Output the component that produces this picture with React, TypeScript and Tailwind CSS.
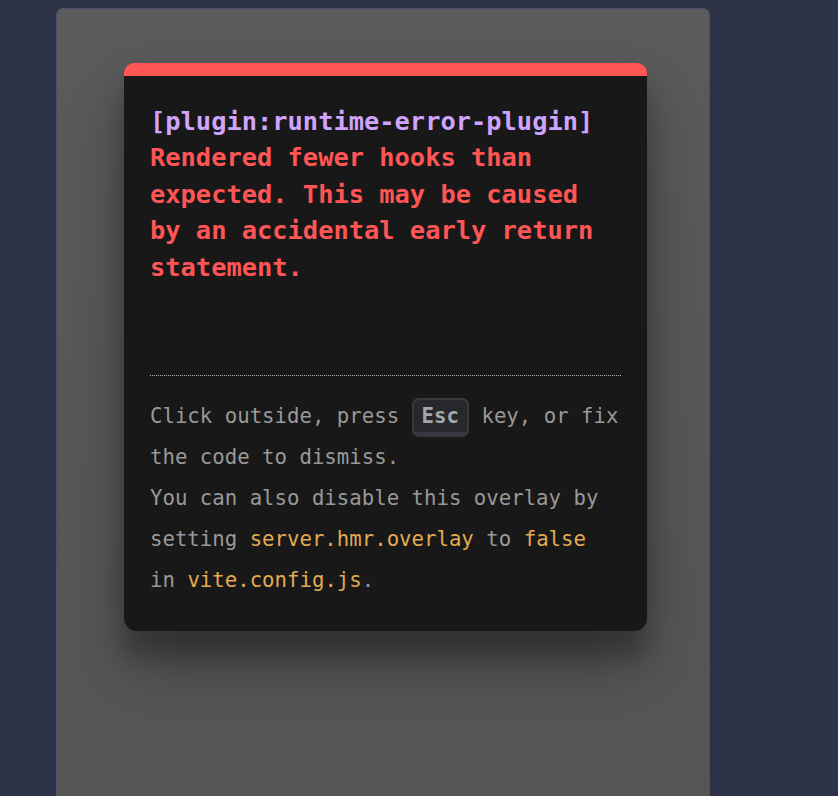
import React from 'react';

const title = ['Rendered fewer hooks than', 'expected. This may be caused', 'by an accidental early return', 'statement.'];

const Code: React.FC<{ children: React.ReactNode }> = ({ children }) => (
  <code className="font-['DejaVu_Sans_Mono',monospace] text-[#e2aa53]">{children}</code>
);

export default function App() {
  return (
    <div className="h-[796px] w-full overflow-hidden bg-[#2d3246] pl-[56px] pt-[8px]">
      {/* preview frame with the error backdrop */}
      <div className="h-[820px] w-[654px] rounded-t-[7px] border border-[#4b5169] bg-gradient-to-b from-[#5b5b5b] to-[#555555] pl-[67px] pt-[54px]">
        <div className="w-[523px] rounded-t-[10px] rounded-b-[13px] border-t-[13px] border-[#ff5555] bg-[#181818] px-[26px] pb-[30px] pt-[27px] font-['DejaVu_Sans_Mono',monospace] shadow-[0_33px_66px_rgba(0,0,0,0.3),0_26px_21px_rgba(0,0,0,0.22)]">
          <div className="text-[25.4px] font-bold leading-[36.4px]">
            <div className="text-[#cfa4ff]">[plugin:runtime-error-plugin]</div>
            {title.map((line) => (
              <div key={line} className="whitespace-pre text-[#ff5555]">
                {line}
              </div>
            ))}
          </div>

          <div className="mt-[90px] border-t border-dotted border-[#b5b5b5] pt-[20px] text-[20.7px] leading-[41px] text-[#999999]">
            <div className="whitespace-pre">
              Click outside, press{' '}
              <kbd className="rounded-[7px] border-x-2 border-t-2 border-b-[5px] border-[#363940] bg-[#26282c] px-[8px] py-[4px] font-['DejaVu_Sans_Mono',monospace] text-[20.7px] font-bold leading-[1.5] text-[#a6a7ab]">
                Esc
              </kbd>{' '}
              key, or fix
            </div>
            <div>the code to dismiss.</div>
            <div>You can also disable this overlay by</div>
            <div className="whitespace-pre">
              setting <Code>server.hmr.overlay</Code> to <Code>false</Code>
            </div>
            <div className="whitespace-pre">
              in <Code>vite.config.js</Code>.
            </div>
          </div>
        </div>
      </div>
    </div>
  );
}
